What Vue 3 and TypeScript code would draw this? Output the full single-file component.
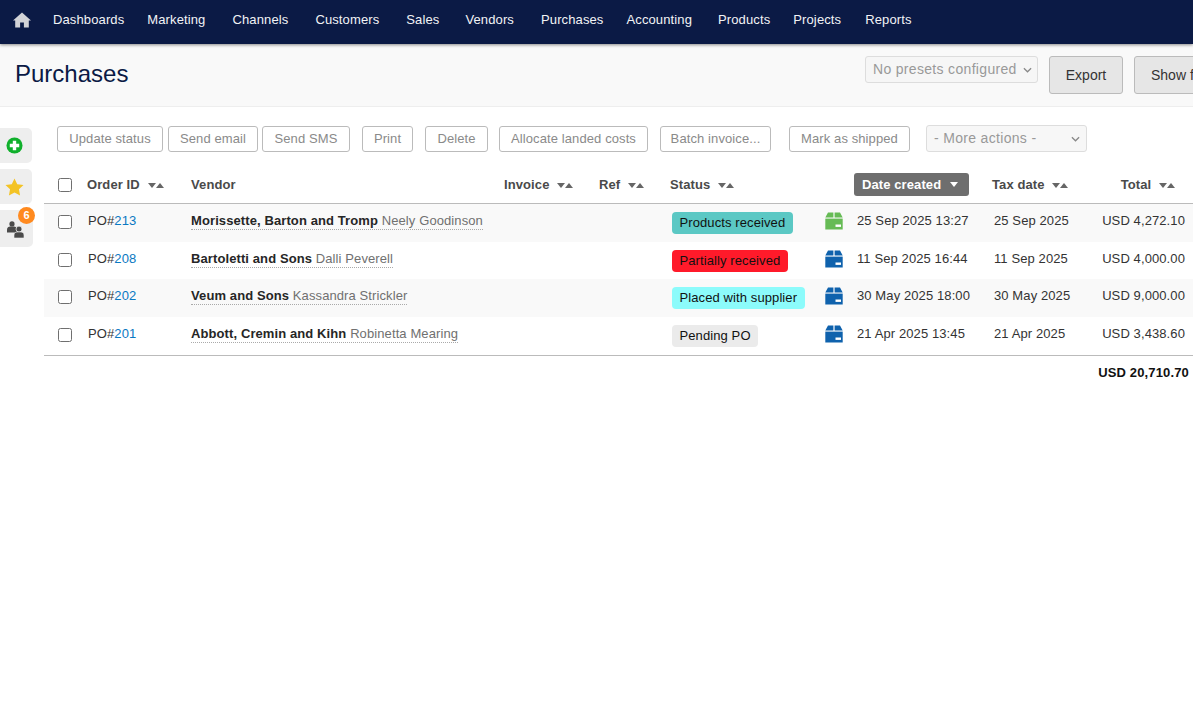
<script setup lang="ts">
interface Row {
  id: string
  vendor: string
  contact: string
  status: string
  statusClass: string
  boxClass: string
  created: string
  tax: string
  total: string
}
const nav: string[] = ['Dashboards', 'Marketing', 'Channels', 'Customers', 'Sales', 'Vendors', 'Purchases', 'Accounting', 'Products', 'Projects', 'Reports']
const actions = [
  { label: 'Update status', cls: 'a1' },
  { label: 'Send email', cls: 'a2' },
  { label: 'Send SMS', cls: 'a3' },
  { label: 'Print', cls: 'a4' },
  { label: 'Delete', cls: 'a5' },
  { label: 'Allocate landed costs', cls: 'a6' },
  { label: 'Batch invoice...', cls: 'a7' },
  { label: 'Mark as shipped', cls: 'a8' }
]
const rows: Row[] = [
  { id: '213', vendor: 'Morissette, Barton and Tromp', contact: 'Neely Goodinson', status: 'Products received', statusClass: 's-products', boxClass: 'box-green', created: '25 Sep 2025 13:27', tax: '25 Sep 2025', total: 'USD 4,272.10' },
  { id: '208', vendor: 'Bartoletti and Sons', contact: 'Dalli Peverell', status: 'Partially received', statusClass: 's-partial', boxClass: 'box-blue', created: '11 Sep 2025 16:44', tax: '11 Sep 2025', total: 'USD 4,000.00' },
  { id: '202', vendor: 'Veum and Sons', contact: 'Kassandra Strickler', status: 'Placed with supplier', statusClass: 's-placed', boxClass: 'box-blue', created: '30 May 2025 18:00', tax: '30 May 2025', total: 'USD 9,000.00' },
  { id: '201', vendor: 'Abbott, Cremin and Kihn', contact: 'Robinetta Mearing', status: 'Pending PO', statusClass: 's-pending', boxClass: 'box-blue', created: '21 Apr 2025 13:45', tax: '21 Apr 2025', total: 'USD 3,438.60' }
]
</script>

<template>
  <div class="page">
    <nav class="topbar">
      <svg class="home" viewBox="0 0 18 16" width="18" height="16" aria-hidden="true">
        <path d="M9 0.5 L18 8.4 L15.8 8.4 L15.8 15.5 L10.9 15.5 L10.9 10.4 L7.1 10.4 L7.1 15.5 L2.2 15.5 L2.2 8.4 L0 8.4 Z" fill="#d2d3d7" />
      </svg>
      <a v-for="item in nav" :key="item" class="nav-item" :class="'n-' + item.toLowerCase()">{{ item }}</a>
    </nav>

    <header class="titlebar">
      <h1>Purchases</h1>
      <div class="title-tools">
        <div class="select preset">
          <span>No presets configured</span>
          <svg viewBox="0 0 10 6" width="9" height="6"><path d="M1 1 L5 5 L9 1" fill="none" stroke="#888" stroke-width="1.4" /></svg>
        </div>
        <button class="big-btn export">Export</button>
        <button class="big-btn show">Show filters</button>
      </div>
    </header>

    <div class="body">
      <aside class="side">
        <div class="tab t1">
          <svg viewBox="0 0 18 18" width="17" height="17">
            <circle cx="9" cy="9" r="8.5" fill="#10b02c" />
            <path d="M7.2 4 H10.8 V7.2 H14 V10.8 H10.8 V14 H7.2 V10.8 H4 V7.2 H7.2 Z" fill="#fff" />
          </svg>
        </div>
        <div class="tab t2">
          <svg viewBox="0 0 20 19" width="19" height="18">
            <path d="M10 0.6 L12.9 6.6 L19.5 7.4 L14.7 12 L15.9 18.5 L10 15.3 L4.1 18.5 L5.3 12 L0.5 7.4 L7.1 6.6 Z" fill="#f3c325" />
          </svg>
        </div>
        <div class="tab t3">
          <svg viewBox="0 0 17 17" width="17" height="17">
            <circle cx="5" cy="2.9" r="2.6" fill="#4a4a4a" />
            <path d="M0 11.6 V8.6 C0 6.6 1.6 5.6 3 5.6 H7 C8.4 5.6 10 6.6 10 8.6 V11.6 Z" fill="#4a4a4a" />
            <circle cx="12" cy="8.1" r="3" fill="#4a4a4a" stroke="#eeeeee" stroke-width="0.8" />
            <path d="M7 17 V14 C7 12 8.6 11 10 11 H14 C15.4 11 17 12 17 14 V17 Z" fill="#4a4a4a" stroke="#eeeeee" stroke-width="0.6" />
          </svg>
          <span class="count">6</span>
        </div>
      </aside>

      <main class="content">
        <div class="toolbar">
          <button v-for="a in actions" :key="a.label" class="act" :class="a.cls">{{ a.label }}</button>
          <div class="select more">
            <span>- More actions -</span>
            <svg viewBox="0 0 10 6" width="9" height="6"><path d="M1 1 L5 5 L9 1" fill="none" stroke="#888" stroke-width="1.4" /></svg>
          </div>
        </div>

        <table class="grid">
          <colgroup>
            <col class="c-check" /><col class="c-order" /><col class="c-vendor" /><col class="c-invoice" /><col class="c-ref" />
            <col class="c-status" /><col class="c-box" /><col class="c-date" /><col class="c-tax" /><col class="c-total" />
          </colgroup>
          <thead>
            <tr>
              <th class="check-cell"><input type="checkbox" class="check" /></th>
              <th>Order ID <span class="sort"><i class="dn"></i><i class="up"></i></span></th>
              <th>Vendor</th>
              <th>Invoice <span class="sort"><i class="dn"></i><i class="up"></i></span></th>
              <th>Ref <span class="sort"><i class="dn"></i><i class="up"></i></span></th>
              <th>Status <span class="sort"><i class="dn"></i><i class="up"></i></span></th>
              <th></th>
              <th><span class="active-sort">Date created <i class="dn white"></i></span></th>
              <th>Tax date <span class="sort"><i class="dn"></i><i class="up"></i></span></th>
              <th class="th-total">Total <span class="sort"><i class="dn"></i><i class="up"></i></span></th>
            </tr>
          </thead>
          <tbody>
            <tr v-for="r in rows" :key="r.id">
              <td class="check-cell"><input type="checkbox" class="check" /></td>
              <td class="order">PO#<a>{{ r.id }}</a></td>
              <td class="vendor"><span class="dotted"><b>{{ r.vendor }}</b> <span class="contact">{{ r.contact }}</span></span></td>
              <td></td>
              <td></td>
              <td class="status"><span class="badge" :class="r.statusClass">{{ r.status }}</span></td>
              <td class="box-cell">
                <svg class="box" :class="r.boxClass" viewBox="0 0 18 18" width="18" height="18">
                  <path d="M3 0.5 H8.4 V5.5 H0.3 Z M9.6 0.5 H15 L17.7 5.5 H9.6 Z" />
                  <path d="M0.3 6.6 H17.7 V17.5 H0.3 Z" />
                  <rect x="10.5" y="12.5" width="5.5" height="2.4" fill="#fff" />
                </svg>
              </td>
              <td class="created">{{ r.created }}</td>
              <td class="tax">{{ r.tax }}</td>
              <td class="total">{{ r.total }}</td>
            </tr>
          </tbody>
        </table>
        <div class="sum">USD 20,710.70</div>
      </main>
    </div>
  </div>
</template>

<style scoped>
.page {
  width: 1193px;
  height: 704px;
  overflow: hidden;
  background: #fff;
  font-family: "Liberation Sans", Arial, sans-serif;
  font-size: 13px;
  letter-spacing: 0.1px;
  color: #333;
}
.topbar {
  height: 44px;
  background: #0b1a45;
  display: flex;
  align-items: center;
  padding-left: 13px;
  box-shadow: 0 1px 3px rgba(0, 0, 0, 0.45);
  position: relative;
  z-index: 2;
}
.home { margin-right: 22px; margin-top: -5px; flex: none; }
.nav-item {
  color: #f2f3f5;
  font-size: 13px;
  margin-right: 23px;
  margin-top: -5px;
  letter-spacing: 0.12px;
  white-space: nowrap;
}
.n-marketing, .n-channels, .n-customers, .n-vendors { margin-right: 27px; }
.n-sales, .n-accounting { margin-right: 26px; }
.n-projects { margin-right: 24px; }
.titlebar {
  height: 62px;
  background: #f9f9f9;
  border-bottom: 1px solid #eeeeee;
  display: flex;
  justify-content: space-between;
  box-sizing: content-box;
  overflow: hidden;
}
h1 {
  margin: 15px 0 0 15px;
  font-size: 24px;
  font-weight: 400;
  line-height: 29px;
  letter-spacing: 0;
  color: #0b1a45;
}
.title-tools {
  display: flex;
  align-items: flex-start;
  padding-top: 12px;
  position: absolute;
  left: 865px;
  white-space: nowrap;
}
.select {
  display: flex;
  align-items: center;
  justify-content: space-between;
  box-sizing: border-box;
  border: 1px solid #ddd;
  border-radius: 3px;
  background: #f7f7f7;
  color: #999;
  font-size: 14px;
}
.select span { margin-top: -2px; letter-spacing: 0.32px; }
.preset {
  width: 173px;
  height: 27px;
  padding: 0 5px 0 7px;
  background: #f6f6f6;
  margin-right: 11px;
}
.big-btn {
  font: 14px "Liberation Sans", Arial, sans-serif;
  height: 38px;
  box-sizing: border-box;
  background: #e6e6e6;
  border: 1px solid #bbb;
  border-radius: 3px;
  color: #333;
  padding: 0;
  flex: none;
}
.export { width: 74px; margin-right: 11px; }
.show { width: 110px; text-align: left; padding-left: 16px; }
.body { display: flex; }
.side {
  width: 44px;
  flex: none;
  padding-top: 21px;
  display: flex;
  flex-direction: column;
  gap: 6px;
}
.tab {
  width: 32px;
  height: 35px;
  background: #eeeeee;
  border-radius: 0 5px 5px 0;
  display: flex;
  align-items: center;
  justify-content: center;
  position: relative;
}
.t1 svg { margin-right: 4px; }
.t2 svg { margin-right: 4px; }
.t3 { width: 33px; height: 37px; }
.t3 svg { margin-right: 3px; margin-top: 1px; }
.count {
  position: absolute;
  left: 18px;
  top: -3px;
  width: 17px;
  height: 17px;
  border-radius: 50%;
  background: #ff8a1f;
  color: #fff;
  font-size: 11px;
  font-weight: 700;
  text-align: center;
  line-height: 16px;
}
.content { width: 1149px; flex: none; }
.toolbar {
  display: flex;
  align-items: center;
  padding: 18px 0 0 13px;
  height: 27px;
}
.act {
  font: 13px "Liberation Sans", Arial, sans-serif;
  letter-spacing: 0.1px;
  height: 26px;
  box-sizing: border-box;
  padding: 0;
  background: #fff;
  border: 1px solid #bbbbbb;
  border-radius: 3px;
  color: #8a8a8a;
  white-space: nowrap;
  flex: none;
}
.a1 { width: 106px; margin-right: 5px; }
.a2 { width: 90px; margin-right: 4px; }
.a3 { width: 88px; margin-right: 12px; }
.a4 { width: 51px; margin-right: 12px; }
.a5 { width: 63px; margin-right: 11px; }
.a6 { width: 149px; margin-right: 12px; }
.a7 { width: 111px; margin-right: 18px; }
.a8 { width: 121px; margin-right: 16px; }
.more {
  width: 161px;
  height: 27px;
  padding: 0 6px 0 7px;
  font-size: 14px;
  flex: none;
}
.grid {
  table-layout: fixed;
  border-collapse: collapse;
  width: 1149px;
  margin-top: 18px;
}
.c-check { width: 43px; }
.c-order { width: 104px; }
.c-vendor { width: 313px; }
.c-invoice { width: 95px; }
.c-ref { width: 71px; }
.c-status { width: 155px; }
.c-box { width: 29px; }
.c-date { width: 138px; }
.c-tax { width: 100px; }
.c-total { width: 101px; }
th {
  height: 33px;
  padding: 0 0 4px 0;
  text-align: left;
  font-size: 13px;
  font-weight: 700;
  color: #4a4a4a;
  border-bottom: 1px solid #bbb;
  white-space: nowrap;
  box-sizing: border-box;
}
td {
  height: 38px;
  padding: 0;
  vertical-align: top;
  font-size: 13px;
  color: #333;
  white-space: nowrap;
  line-height: 15px;
  padding-top: 9px;
  box-sizing: border-box;
}
tbody tr:nth-child(odd) td { background: #f9f9f9; }
tbody tr:nth-child(1) td { height: 39px; }
tbody tr:nth-child(2) td { height: 37px; }
tbody tr:last-child td { height: 38px; background: #fff; border-bottom: 1px solid #bbb; }
th.check-cell { padding: 0 0 3px 14px; }
td.check-cell { padding: 0 0 2px 14px; }
.check-cell { vertical-align: middle; text-align: left; }
.check {
  appearance: none;
  width: 14px;
  height: 14px;
  margin: 0;
  display: block;
  box-sizing: border-box;
  border: 1px solid #6f6f6f;
  border-radius: 2.5px;
  background: #fff;
}
.order { padding-left: 1px; }
.order a { color: #0a78c2; }
.dotted { border-bottom: 1px dotted #aaa; padding-bottom: 1px; }
.contact { color: #707070; }
.vendor b { color: #262626; }
.status { padding-top: 8px; padding-left: 2px; }
.badge {
  display: inline-block;
  height: 22px;
  line-height: 22px;
  padding: 0 7.5px;
  border-radius: 4px;
  color: #111;
  font-size: 13px;
}
.s-products { background: #5bc8c4; }
.s-partial { background: #ff1a2a; }
.s-placed { background: #8cfbfb; }
.s-pending { background: #ebebeb; }
.box-cell { padding-top: 8px; }
.box { display: block; }
.box-green { fill: #66bb55; }
.box-blue { fill: #0f62ad; }
.created { padding-left: 3px; }
.tax { padding-left: 2px; }
.total { text-align: right; padding-right: 8px; }
.th-total { text-align: right; padding-right: 18px; }
.sort { display: inline-flex; align-items: center; gap: 0; margin-left: 4px; vertical-align: 1px; }
.sort i, .active-sort i { display: inline-block; width: 0; height: 0; border-left: 4px solid transparent; border-right: 4px solid transparent; }
.dn { border-top: 5px solid #666; }
.up { border-bottom: 5px solid #666; }
.active-sort {
  display: inline-flex;
  align-items: center;
  width: 115px;
  height: 23px;
  box-sizing: border-box;
  padding-left: 8px;
  background: #6e6e6e;
  color: #fff;
  border-radius: 3px;
}
.active-sort i.white { border-top: 5px solid #fff; margin-left: 9px; }
.sum {
  text-align: right;
  padding: 9px 4px 0 0;
  font-size: 13px;
  font-weight: 700;
  letter-spacing: 0.15px;
  color: #111;
  line-height: 15px;
}
</style>

<style>
html, body { margin: 0; padding: 0; overflow: hidden; }
</style>
